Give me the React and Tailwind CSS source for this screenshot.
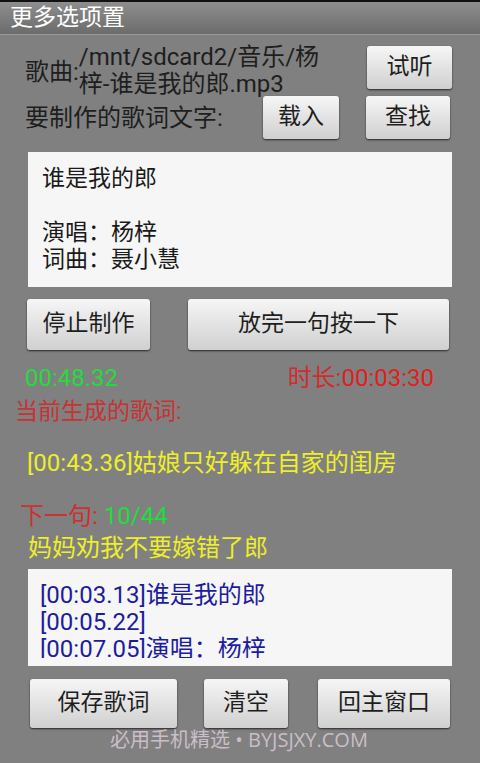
const FONT = "font-['Roboto','Noto_Sans_CJK_SC',sans-serif]"

function Btn({ className = '', children }) {
  return (
    <div
      className={`flex items-center justify-center rounded-[3px] bg-linear-to-b from-[#f6f6f6] to-[#d0d0d0] shadow-[0_1px_2px_rgba(0,0,0,0.7)] text-[23px] text-[#1e1e1e] ${className}`}
    >
      {children}
    </div>
  )
}

export default function App() {
  return (
    <div className={`w-[480px] h-[763px] bg-[#808080] overflow-hidden flex flex-col ${FONT}`}>
      {/* title bar */}
      <div className="h-[35px] shrink-0 border-t-2 border-[#111] bg-linear-to-b from-[#8e8e8e] to-[#6c6c6c] border-b border-b-[#9a9a9a] flex items-center pl-[10px] text-[23px] text-white">
        更多选项置
      </div>

      {/* song row */}
      <div className="mt-[11px] h-[50px] flex shrink-0">
        <div className="flex items-center pl-[25px] text-[24px] text-[#1e1e1e] leading-[27px]">
          <span className="mt-[2px]">歌曲:</span>
          <span>
            /mnt/sdcard2/音乐/杨
            <br />
            梓-谁是我的郎.mp3
          </span>
        </div>
        <Btn className="ml-auto mr-[28px] w-[85px] h-[43px]">试听</Btn>
      </div>

      {/* lyric text row */}
      <div className="h-[43px] flex items-center shrink-0">
        <span className="pl-[25px] text-[24px] text-[#1e1e1e] w-[263px]">要制作的歌词文字:</span>
        <Btn className="w-[76px] h-[43px]">载入</Btn>
        <Btn className="ml-[27px] w-[84px] h-[43px]">查找</Btn>
      </div>

      {/* source text box */}
      <div className="mt-[13px] mx-[28px] h-[135px] shrink-0 bg-[#f6f6f6] pt-[13px] px-[14px] text-[23px] leading-[27px] text-[#1a1a1a]">
        <div>谁是我的郎</div>
        <div>&nbsp;</div>
        <div>演唱：杨梓</div>
        <div>词曲：聂小慧</div>
      </div>

      {/* make buttons */}
      <div className="mt-[12px] h-[51px] flex shrink-0">
        <Btn className="ml-[27px] w-[123px] h-[51px]">停止制作</Btn>
        <Btn className="ml-[38px] w-[261px] h-[51px]">放完一句按一下</Btn>
      </div>

      {/* times */}
      <div className="mt-[14px] h-[28px] flex items-center justify-between pl-[25px] pr-[46px] shrink-0 text-[24px]">
        <span className="text-[#22dd3a]">00:48.32</span>
        <span className="text-[#d42a2a]">
          时长:<span className="text-[#e01e1e]">00:03:30</span>
        </span>
      </div>

      <div className="mt-[6px] h-[28px] flex items-center pl-[15px] shrink-0 text-[23px] text-[#c83232]">
        当前生成的歌词:
      </div>

      <div className="mt-[23px] h-[28px] flex items-center pl-[27px] shrink-0 text-[24px] text-[#eeee2a]">
        [00:43.36]姑娘只好躲在自家的闺房
      </div>

      <div className="mt-[25px] h-[28px] flex items-center pl-[20px] shrink-0 text-[24px] text-[#cc3030]">
        下一句:&nbsp;<span className="text-[#22dd3a]">10/44</span>
      </div>

      <div className="mt-[4px] h-[28px] flex items-center pl-[28px] shrink-0 text-[24px] text-[#eeee2a]">
        妈妈劝我不要嫁错了郎
      </div>

      {/* generated lyrics box */}
      <div className="mt-[7px] mx-[28px] h-[97px] shrink-0 bg-[#f6f6f6] px-[12px] text-[24px] leading-[27px] text-[#1c1c9e]">
        <div className="h-[89px] pt-[13px] overflow-hidden">
          <div>[00:03.13]谁是我的郎</div>
          <div>[00:05.22]</div>
          <div>[00:07.05]演唱：杨梓</div>
        </div>
      </div>

      {/* bottom buttons */}
      <div className="mt-[13px] h-[49px] flex shrink-0">
        <Btn className="ml-[30px] w-[147px] h-[49px]">保存歌词</Btn>
        <Btn className="ml-[27px] w-[84px] h-[49px]">清空</Btn>
        <Btn className="ml-[30px] w-[132px] h-[49px]">回主窗口</Btn>
      </div>

      <div className="h-[24px] flex items-center justify-center pr-[2px] text-[20px] text-[#cbbdc9] font-['Open_Sans','Noto_Sans_CJK_SC',sans-serif]">
        必用手机精选 • BYJSJXY.COM
      </div>
    </div>
  )
}
